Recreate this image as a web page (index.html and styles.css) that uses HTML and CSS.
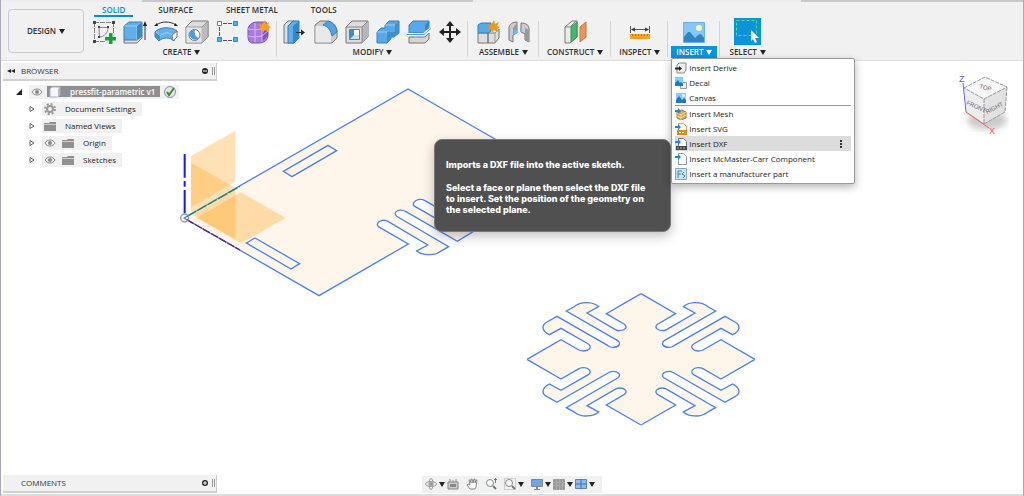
FILE: index.html
```html
<!DOCTYPE html>
<html lang="en">
<head>
<meta charset="utf-8">
<title>pressfit-parametric v1</title>
<link rel="stylesheet" href="styles.css">
</head>
<body>
<div class="app">
  <div class="doc-strip"><span class="strip-a"></span><span class="strip-b"></span><span class="strip-c"></span><span class="strip-d"></span></div>
  <header class="ribbon">
    <button class="design" type="button">DESIGN <i class="caret"></i></button>
    <div class="ribbon-body">
      <nav class="tabs">
        <a class="tab active" href="#">SOLID</a>
        <a class="tab" href="#">SURFACE</a>
        <a class="tab" href="#">SHEET METAL</a>
        <a class="tab" href="#">TOOLS</a>
      </nav>
      <div class="groups">
        <section class="group wide">
          <div class="tools">
            <button class="tool" type="button" aria-label="Create Sketch"><svg viewBox="0 0 24 24"><g fill="none" stroke="#888" stroke-dasharray="5 1"><path d="M2 2.500H21M2.500 2V22M21.500 2V13M2 21.500H13"/><path d="M7 7.500H16C16 13 12 17 7.500 17Z" stroke-dasharray="none"/></g><path d="M1 1h3v3H1zM20 1h3v3h-3zM1 20h3v3H1zM6 6h2v2H6zM15 6h2v2h-2zM6 16h2v2H6z" fill="#444"/><path d="M17 13h3.500v4H24v3.500h-3.500V24H17v-3.500h-4V17h4z" fill="#18a33a"/></svg></button>
            <button class="tool" type="button" aria-label="Extrude"><svg viewBox="0 0 24 24"><path d="M1 20v3h13l5-5v-3z" fill="#ddd" stroke="#777"/><path d="M1 6l5-4h13v14l-5 4H1z" fill="#62aee8" stroke="#347fb9"/><path d="M1 6h13l5-4M14 6v14" fill="none" stroke="#9bd0f6"/><path d="M14 6l5-4v14l-5 4z" fill="#338acb"/><path d="M22 20V5" stroke="#333"/><path d="M22 1l2 5h-4z" fill="#222"/></svg></button>
            <button class="tool" type="button" aria-label="Revolve"><svg viewBox="0 0 24 24"><path d="M2 5C8 1 16 1 22 5" fill="none" stroke="#333"/><path d="M0 6l3-3 1 3zM24 6l-3-3-1 3z" fill="#222"/><path d="M1 12C5 7 17 6 23 11L20 21C16 17 9 17 5 21L1 17z" fill="#65b1ec" stroke="#397db4"/><path d="M2 12l4 4C10 12 15 12 18 15" fill="none" stroke="#a8d8fb"/><path d="M18 15l5-4v6l-4 4z" fill="#f3f3f3" stroke="#777"/><path d="M1 12l5 4v4l-5-3z" fill="#3d8fca"/></svg></button>
            <button class="tool" type="button" aria-label="Hole"><svg viewBox="0 0 24 24"><path d="M1 7l6-6h16v16l-6 6H1z" fill="#ddd" stroke="#777"/><path d="M1 7h16l6-6v16l-6 6z" fill="#bbb" stroke="#999"/><path d="M1.500 7.500h15v15h-15z" fill="#e4e4e4"/><circle cx="9.500" cy="15" r="5.500" fill="#fff" stroke="#777"/><path d="M5 12a5.500 5.500 0 0 0 9 6a6 6 0 0 1-4-8a6 6 0 0 0-5 2z" fill="#4b9edc"/></svg></button>
            <button class="tool" type="button" aria-label="Rectangular Pattern"><svg viewBox="0 0 24 24"><path d="M7 3.500h10M3.500 7v10M7 20.500h10" stroke="#555" stroke-dasharray="4 1"/><path d="M1.500 1.500h4v4h-4z" fill="#fff" stroke="#777"/><path d="M17.500 1.500h4v4h-4zM1.500 17.500h4v4h-4zM17.500 17.500h4v4h-4z" fill="#57aceb" stroke="#3988c1"/></svg></button>
            <button class="tool" type="button" aria-label="Create Form"><svg viewBox="0 0 24 24"><path d="M1 9C2 4 6 2 11 2h8l2 4v9c0 5-4 8-9 8H6c-4 0-5-3-5-7z" fill="#a67bdc" stroke="#7d52b5"/><path d="M15 10l6-5v10l-6 7z" fill="#7e4fc0"/><path d="M1 9c5 1 9 1 14 0l5-4M1 16c5 1 9 1 14 0l6-5M8 3v19M15 9v13" fill="none" stroke="#d8b9f6"/><path d="M18 0l1 4 3-2-1 4 3 1-3 2 1 3-4-2-2 3-1-4-4 1 3-3-3-3 4 1z" fill="#ff9f19"/></svg></button>
          </div>
          <button class="group-name" type="button">CREATE <i class="caret"></i></button>
        </section>
        <section class="group wide">
          <div class="tools">
            <button class="tool" type="button" aria-label="Press Pull"><svg viewBox="0 0 24 24"><path d="M1 5l4-4h6v22H1z" fill="#ddd" stroke="#777"/><path d="M5 6l5-5h6v17l-5 5H5z" fill="#62aee8" stroke="#347fb9"/><path d="M10 6l6-5v17l-6 5z" fill="#3188c9"/><path d="M13 12.500h6" stroke="#333"/><path d="M22 12.500l-4-3v6z" fill="#222"/></svg></button>
            <button class="tool" type="button" aria-label="Fillet"><svg viewBox="0 0 24 24"><path d="M1 5l5-4h6c6 0 11 5 11 11v6l-5 5H1z" fill="#ccc" stroke="#777"/><path d="M1.500 6H8c5 0 9 4 9 9v7.500H1.500z" fill="#e9e9e9"/><path d="M9 5l5-4c5 1 9 6 9 11l-5 4C17 11 14 6 9 5z" fill="#51a4e4" stroke="#347fb9"/></svg></button>
            <button class="tool" type="button" aria-label="Shell"><svg viewBox="0 0 24 24"><path d="M1 7l6-6h16v16l-6 6H1z" fill="#ddd" stroke="#777"/><path d="M17 7l6-6v16l-6 6z" fill="#b7b7b7"/><path d="M1 7h16v16M17 7l6-6" fill="none" stroke="#888"/><path d="M4.500 9.500h10v10h-10z" fill="#bfe2fa" stroke="#777"/><path d="M5 10h4v5l-4 4z" fill="#388dcc"/><path d="M9 10h5v5H9z" fill="#fff"/></svg></button>
            <button class="tool" type="button" aria-label="Combine"><svg viewBox="0 0 24 24"><path d="M9 5l4-4h10v12l-5 4h-3v2l-4 4H1V12l4-4h4z" fill="#58a9e6" stroke="#347fb9"/><path d="M19 5l4-4v12l-5 4h-3v2l-4 4V12h8z" fill="#3c91d1"/><path d="M1 12h10M9 5h10" stroke="#9bd0f6"/></svg></button>
            <button class="tool" type="button" aria-label="Split Body"><svg viewBox="0 0 24 24"><path d="M2 5l4-4h16v8l-4 4H2z" fill="#58a9e6" stroke="#347fb9"/><path d="M18 5l4-4v8l-4 4z" fill="#338acb"/><path d="M2 17h16l4-4v6l-4 4H2z" fill="#d6d6d6" stroke="#777"/><path d="M0 14.500h17l7-6" fill="none" stroke="#fff" stroke-width="3"/><path d="M0 14.500h17l7-6" fill="none" stroke="#3aa4ec"/></svg></button>
            <button class="tool" type="button" aria-label="Move"><svg viewBox="0 0 24 24"><path d="M12 4v16M4 12h16" stroke="#222" stroke-width="2"/><path d="M12 1l4 5H8zM12 23l-4-5h8zM1 12l5-4v8zM23 12l-5 4V8z" fill="#222"/></svg></button>
          </div>
          <button class="group-name" type="button">MODIFY <i class="caret"></i></button>
        </section>
        <section class="group">
          <div class="tools">
            <button class="tool" type="button" aria-label="New Component"><svg viewBox="0 0 24 24"><path d="M2 13h10v10H2zM12 13h7l4-4v9l-4 5h-7z" fill="#dedede" stroke="#777"/><path d="M2 5l3-2h10v8l-3 2H2z" fill="#57a9e7" stroke="#347fb9"/><path d="M19 13v10M19 13l4-4" stroke="#999"/><path d="M18 0l1 4 4-2-2 4 3 1-3 2 1 3-4-2-2 3-1-4-3 1 2-3-3-3 4 1z" fill="#f29813"/></svg></button>
            <button class="tool" type="button" aria-label="Joint"><svg viewBox="0 0 24 24"><path d="M2 8C2 4 6 2 10 2v11l-4 2v7l-4-2zM14 3c5 0 8 2 8 6v13l-4-2v-6l-4-2z" fill="#ccc" stroke="#777"/><path d="M6 8l4-5v10l-4 2zM18 8l4 2v12l-4-2z" fill="#999"/><path d="M7 10h3v4H7zM13 8h2v4h-2z" fill="#68b7f2"/></svg></button>
          </div>
          <button class="group-name" type="button">ASSEMBLE <i class="caret"></i></button>
        </section>
        <section class="group">
          <div class="tools">
            <button class="tool" type="button" aria-label="Offset Plane"><svg viewBox="0 0 24 24"><path d="M2 7l7-6h5v16l-7 6H2z" fill="#ececec" stroke="#777"/><path d="M8 7l6-5v15l-6 5z" fill="#42ba70" stroke="#3b9258"/><path d="M2 7h5l6-6" fill="none" stroke="#888"/><path d="M17 7l6-5v15l-6 5z" fill="#ed925a" stroke="#ca7442"/></svg></button>
          </div>
          <button class="group-name" type="button">CONSTRUCT <i class="caret"></i></button>
        </section>
        <section class="group">
          <div class="tools">
            <button class="tool" type="button" aria-label="Measure"><svg viewBox="0 0 24 24"><path d="M2.500 6v7M21.500 6v7M4 9.500h16" stroke="#555"/><path d="M3 9.500l4-2v4zM21 9.500l-4-2v4z" fill="#333"/><path d="M2 14h20v5H2z" fill="#f3a31d"/><path d="M4.500 14v2M7.500 14v2M10.500 14v2M13.500 14v2M16.500 14v2M19.500 14v2" stroke="#b87818"/></svg></button>
          </div>
          <button class="group-name" type="button">INSPECT <i class="caret"></i></button>
        </section>
        <section class="group tight">
          <div class="tools">
            <button class="tool" type="button" aria-label="Insert"><svg viewBox="0 0 24 24"><path d="M1.500 2.500h21v20h-21z" fill="#83c8f8" stroke="#6bb2e4"/><path d="M2 17l4-5 2 0 5 6 3-3 3-1 3 4v4H2z" fill="#3185c4"/><circle cx="17" cy="8" r="3" fill="#fff6ba"/></svg></button>
          </div>
          <button class="group-name open" type="button" aria-expanded="true">INSERT <i class="caret"></i></button>
          <div class="menu" role="menu">
            <button class="item" type="button" role="menuitem"><svg viewBox="0 0 12 12"><path d="M2 3l2-2h7v7l-2 3H2z" fill="#eee" stroke="#888"/><path d="M0 6.500h5" stroke="#222" stroke-width="2"/><path d="M7 6.500L4 4v5z" fill="#222"/></svg>Insert Derive</button>
            <button class="item" type="button" role="menuitem"><svg viewBox="0 0 12 12"><path d="M5.500 5.500h6v6h-6z" fill="#eee" stroke="#999"/><path d="M0 0h8v9H0z" fill="#8bccf6"/><path d="M0 6l3-3 2 3 1-1 2 2v2H0z" fill="#1e7abd"/></svg>Decal</button>
            <button class="item" type="button" role="menuitem"><svg viewBox="0 0 12 12"><path d="M1 1h10v10H1z" fill="#8bccf6"/><path d="M1 8l3-4 3 4 2-2 2 2v3H1z" fill="#1e7abd"/><circle cx="8.500" cy="3.500" r="1.500" fill="#fff"/></svg>Canvas</button>
            <hr class="rule">
            <button class="item" type="button" role="menuitem"><svg viewBox="0 0 12 12"><path d="M2 4l5-2 4 2v6l-5 2-4-2z" fill="#d6ad58" stroke="#a67b29"/><path d="M2 5l4 2 5-3M6 7v5M2 8l4 2 5-3" fill="none" stroke="#f1d795"/><path d="M0 2h3V0l3 3-3 3V4H0z" fill="#1489df"/></svg>Insert Mesh</button>
            <button class="item" type="button" role="menuitem"><svg viewBox="0 0 12 12"><path d="M3.500.500h5l3 3v8h-8z" fill="#fff" stroke="#e8a44b"/><path d="M2 7h10v5H2z" fill="#e38912"/><path d="M4 9.500h6" stroke="#fff" stroke-dasharray="2 1"/><path d="M0 3h3V1l3 3-3 3V5H0z" fill="#1489df"/></svg>Insert SVG</button>
            <button class="item hover" type="button" role="menuitem"><svg viewBox="0 0 12 12"><path d="M3.500.500h5l3 3v8h-8z" fill="#fff" stroke="#777"/><path d="M1 8h11v4H1z" fill="#444"/><path d="M2 10h9" stroke="#bbb" stroke-dasharray="2 1"/><path d="M0 3h3V1l3 3-3 3V5H0z" fill="#1489df"/></svg>Insert DXF<svg class="more" viewBox="0 0 4 12"><path d="M1 2h2v2H1zM1 5h2v2H1zM1 8h2v2H1z" fill="#333"/></svg></button>
            <button class="item" type="button" role="menuitem"><svg viewBox="0 0 12 12"><path d="M3.500.500h5l3 3v8h-8z" fill="#fff" stroke="#999"/><path d="M0 3h3V1l3 3-3 3V5H0z" fill="#1489df"/></svg>Insert McMaster-Carr Component</button>
            <button class="item" type="button" role="menuitem"><svg viewBox="0 0 12 12"><path d="M.500.500h11v11H.500z" fill="#c9e4f2" stroke="#76abc5"/><path d="M3 10V3h4M3 6h3M9 4l-2 2 3 2-2 2" fill="none" stroke="#4384a8"/></svg>Insert a manufacturer part</button>
          </div>
        </section>
        <section class="group last">
          <div class="tools">
            <button class="tool selected" type="button" aria-label="Select"><svg viewBox="0 0 27 27"><path d="M2.500 2.500h20v15h-20z" fill="none" stroke="#54db91" stroke-dasharray="3 2"/><path d="M17 12l8 8h-4l2 4-2 1-2-4-2 2z" fill="#fff"/></svg></button>
          </div>
          <button class="group-name" type="button">SELECT <i class="caret"></i></button>
        </section>
      </div>
    </div>
  </header>

  <main class="canvas">
    <svg class="drawing" viewBox="0 60 1024 434" width="1024" height="434" aria-hidden="true">
      <defs>
        <g id="quarter">
          <path class="face" d="M363 26L467 86L414 117C400 126 412 137 427 137C434 137 437 135 441 133L525 84L490 65C505 52 540 46 565 66L587 78L433 167C421 175 430 187 447 187C455 187 458 185 462 182L615 94L645 111C663 121 661 137 638 149L603 130L521 177C508 186 520 198 534 198C541 198 545 197 549 195L603 164L705 223V224H362V26Z"/>
          <path class="edge" d="M363 26L467 86L414 117C400 126 412 137 427 137C434 137 437 135 441 133L525 84L490 65C505 52 540 46 565 66L587 78L433 167C421 175 430 187 447 187C455 187 458 185 462 182L615 94L645 111C663 121 661 137 638 149L603 130L521 177C508 186 520 198 534 198C541 198 545 197 549 195L603 164L705 223"/>
        </g>
      </defs>
      <g transform="translate(370 130) scale(.3333)">
        <path class="face edge" d="M-558 264L114 -123L380 30L460 80L300 290L165 212C145 202 125 216 131 227L240 290H300L312 303L262 334L108 245C88 234 66 246 80 259L236 350L200 371C175 378 150 372 140 363L173 345L55 275C38 264 14 278 25 290L115 342L-153 497Z"/>
      </g>
      <g transform="translate(170 80) scale(.3333)">
        <path class="slot edge" d="M340 274L474 196L500 212L366 290ZM229 489L255 474L389 551L363 567Z"/>
        <path class="plane" d="M63 228L196 152V305L63 382Z"/>
        <path class="plane" d="M63 248L196 325V478L63 402Z"/>
        <path class="plane" d="M80 414L213 337L347 414L213 490Z"/>
        <path d="M50 410L210 319" stroke="#078f80" stroke-width="4" stroke-dasharray="32 4"/>
        <path d="M50 419L210 510" stroke="#64206f" stroke-width="4" stroke-dasharray="24 4"/>
        <path d="M44 222V293M44 303V320M44 330V400" stroke="#1717f5" stroke-width="6"/>
        <circle cx="44" cy="414" r="12" fill="none" stroke="#999" stroke-width="4"/>
      </g>
      <g transform="translate(520 285) scale(.3333)">
        <use href="#quarter"/>
        <use href="#quarter" transform="translate(726 0) scale(-1 1)"/>
        <use href="#quarter" transform="translate(0 446) scale(1 -1)"/>
        <use href="#quarter" transform="translate(726 446) scale(-1 -1)"/>
      </g>
    </svg>

    <svg class="viewcube" viewBox="0 0 56 72" aria-label="View cube">
      <defs><filter id="soft"><feGaussianBlur stdDeviation="3"/></filter></defs>
      <ellipse cx="34" cy="50" rx="20" ry="10" fill="#999" opacity=".5" filter="url(#soft)"/>
      <path d="M11 18L32 7L54 17L31 29Z" fill="#f7f7f7"/>
      <path d="M11 18L31 29V54L13 42Z" fill="#ededed"/>
      <path d="M31 29L54 17L52 42L31 54Z" fill="#e2e2e2"/>
      <path d="M11 18L32 7L54 17L31 29ZM31 29V54L13 42M31 54L52 42L54 17" fill="none" stroke="#999" stroke-dasharray="4 1"/>
      <path d="M10 13L13 42" stroke="#6666e8"/>
      <path d="M13 42L36 58" stroke="#f06565"/>
      <text x="6" y="12" class="axis" fill="#5555e8">Z</text>
      <text x="36" y="64" class="axis" fill="#ef5555">X</text>
      <text class="side" transform="translate(13 34) rotate(25)">FRONT</text>
      <text class="side" transform="translate(34 44) rotate(-28)">RIGHT</text>
      <text class="side" transform="translate(26 18) rotate(15)">TOP</text>
    </svg>

    <aside class="browser">
      <div class="panel-bar">
        <svg class="rewind" viewBox="0 0 8 6"><path d="M4 1v4L0 3zM8 1v4L4 3z" fill="#222"/></svg>
        <span class="panel-title">BROWSER</span>
        <button class="round" type="button" aria-label="Collapse"><svg viewBox="0 0 6 6"><circle cx="3" cy="3" r="3" fill="#222"/><path d="M1 3h4" stroke="#fff"/></svg></button>
        <i class="grip"></i>
      </div>
      <ul class="tree">
        <li class="root"><svg class="twist" viewBox="0 0 6 6"><path d="M6 0v6H0z" fill="#222"/></svg>
          <span class="row"><svg class="ico" viewBox="0 0 12 12"><path d="M1 6C3 2 9 2 11 6C9 10 3 10 1 6Z" fill="none" stroke="#888"/><circle cx="6" cy="6" r="2" fill="#888"/></svg>
            <span class="doc"><svg class="ico" viewBox="0 0 12 12"><path d="M1 3l2-2h8v8l-2 2H1z" fill="#f5f7fc" stroke="#a9b4c8"/><path d="M9 3l2-2v8l-2 2z" fill="#aeb9cc"/></svg>pressfit-parametric v1</span>
            <svg class="ico" viewBox="0 0 12 12"><circle cx="6" cy="6" r="5.500" fill="#dfe4ef" stroke="#8790a1"/><path d="M3 6l2 3 5-7" fill="none" stroke="#3d8e28" stroke-width="2"/></svg></span></li>
        <li><svg class="twist" viewBox="0 0 6 6"><path d="M1 .500L5 3L1 5.500Z" fill="#fff" stroke="#666"/></svg>
          <span class="row"><svg class="ico" viewBox="0 0 12 12"><circle cx="6" cy="6" r="3" fill="none" stroke="#999" stroke-width="2"/><circle cx="6" cy="6" r="5" fill="none" stroke="#999" stroke-width="2" stroke-dasharray="2 1.927"/></svg><b class="label">Document Settings</b></span></li>
        <li><svg class="twist" viewBox="0 0 6 6"><path d="M1 .500L5 3L1 5.500Z" fill="#fff" stroke="#666"/></svg>
          <span class="row"><svg class="ico" viewBox="0 0 12 12"><path d="M0 3h5l1-1h6v9H0z" fill="#909090"/><path d="M0 4.500h12" stroke="#ccc"/></svg><b class="label">Named Views</b></span></li>
        <li><svg class="twist" viewBox="0 0 6 6"><path d="M1 .500L5 3L1 5.500Z" fill="#fff" stroke="#666"/></svg>
          <span class="row"><svg class="ico" viewBox="0 0 12 12"><path d="M1 6C3 2 9 2 11 6C9 10 3 10 1 6Z" fill="none" stroke="#888"/><circle cx="6" cy="6" r="2" fill="#888"/></svg><svg class="ico" viewBox="0 0 12 12"><path d="M0 3h5l1-1h6v9H0z" fill="#909090"/><path d="M0 4.500h12" stroke="#ccc"/></svg><b class="label">Origin</b></span></li>
        <li><svg class="twist" viewBox="0 0 6 6"><path d="M1 .500L5 3L1 5.500Z" fill="#fff" stroke="#666"/></svg>
          <span class="row"><svg class="ico" viewBox="0 0 12 12"><path d="M1 6C3 2 9 2 11 6C9 10 3 10 1 6Z" fill="none" stroke="#888"/><circle cx="6" cy="6" r="2" fill="#888"/></svg><svg class="ico" viewBox="0 0 12 12"><path d="M0 3h5l1-1h6v9H0z" fill="#909090"/><path d="M0 4.500h12" stroke="#ccc"/></svg><b class="label">Sketches</b></span></li>
      </ul>
    </aside>

    <div class="tooltip" role="tooltip">
      <p>Imports a DXF file into the active sketch.</p>
      <p>Select a face or plane then select the DXF file to insert. Set the position of the geometry on the selected plane.</p>
    </div>

    <footer class="bottom">
      <div class="panel-bar">
        <span class="panel-title">COMMENTS</span>
        <button class="round" type="button" aria-label="Expand"><svg viewBox="0 0 6 6"><circle cx="3" cy="3" r="3" fill="#222"/><path d="M1 3h4M3 1v4" stroke="#fff"/></svg></button>
        <i class="grip"></i>
      </div>
      <div class="viewbar">
        <button type="button" aria-label="Orbit"><svg viewBox="0 0 12 12"><ellipse cx="6" cy="6" rx="5.500" ry="2.500" fill="none" stroke="#999"/><ellipse cx="6" cy="6" rx="2" ry="5.500" fill="none" stroke="#999"/><path d="M6 4v4M4 6h4" stroke="#777"/></svg><i class="caret"></i></button>
        <button type="button" aria-label="Look At"><svg viewBox="0 0 12 12"><path d="M1 4h10v7H1zM3 4V1M6 4V2M9 4V1" fill="#ccc" stroke="#888"/><path d="M3 6h6v3H3z" fill="#888"/></svg></button>
        <button class="spaced" type="button" aria-label="Pan"><svg viewBox="0 0 12 12"><path d="M4 11L1 7l1-1 2 1-1-5h1l1 3V1h1l1 4 1-4h1v4l1-3h1L10 9l-1 2z" fill="#fff" stroke="#888"/></svg></button>
        <button class="spaced" type="button" aria-label="Zoom"><svg viewBox="0 0 12 12"><circle cx="5" cy="5" r="3.500" fill="#f7fbff" stroke="#888"/><path d="M8 8l3 3" stroke="#777" stroke-width="2"/><path d="M10.500 0v5M9 1.500h3" stroke="#777"/></svg></button>
        <button class="spaced" type="button" aria-label="Zoom Window"><svg viewBox="0 0 12 12"><path d="M.500.500h11v11H.500z" fill="none" stroke="#aaa" stroke-dasharray="1 1"/><circle cx="5" cy="5" r="3.500" fill="#f7fbff" stroke="#888"/><path d="M8 8l3 3" stroke="#777" stroke-width="2"/></svg><i class="caret"></i></button>
        <button class="spaced" type="button" aria-label="Display Settings"><svg viewBox="0 0 12 12"><path d="M.500 1.500h11v7H.500z" fill="#70a5e0" stroke="#888"/><path d="M5 9h2v2H5zM3 11h6v1H3z" fill="#888"/></svg><i class="caret"></i></button>
        <button type="button" aria-label="Grid and Snaps"><svg viewBox="0 0 12 12"><path d="M.500 1.500h11v10H.500z" fill="#999" stroke="#999"/><path d="M3.500 1v11M6.500 1v11M9.500 1v11M0 4.500h12M0 7.500h12" stroke="#aaa"/></svg><i class="caret"></i></button>
        <button type="button" aria-label="Viewports"><svg viewBox="0 0 12 12"><path d="M.500 1.500h11v9H.500z" fill="#8fbbea" stroke="#5d83b8"/><path d="M6 1v10M0 6h12" stroke="#4971aa"/></svg><i class="caret"></i></button>
      </div>
    </footer>
  </main>
</div>
</body>
</html>
```
FILE: styles.css
```css
* { box-sizing: border-box; }
body { margin: 0; font-family: "Open Sans", "Noto Sans", sans-serif; font-size: 8px; line-height: 12px; color: #333; background: #fff; }
button { margin: 0; padding: 0; border: 0; background: none; font: inherit; color: inherit; }
svg { display: block; }

.app { display: flex; flex-direction: column; min-height: 100vh; border-left: 1px solid #aaa7b8; border-right: 1px solid #aaa7b8; }
.doc-strip { display: grid; grid-template-columns: 141fr 331fr 328fr 222fr; height: 2px; background: #ededed; }
.strip-b, .strip-d { background: #c8c8c8; }

.ribbon { position: relative; z-index: 2; display: flex; height: 59px; background: #f1f1f1; border-bottom: 1px solid #dedede; }
.design { display: flex; align-items: center; justify-content: center; gap: 3px; width: 76px; height: 44px; margin: 7px 2px 0 7px; border: 1px solid #cacaca; border-radius: 4px; font-weight: 600; }
.caret { display: inline-block; border: 3px solid transparent; border-top: 5px solid #222; border-bottom: 0; }
.ribbon-body { flex: 1; }

.tabs { display: flex; gap: 17px; padding: 2px 0 0 8px; height: 15px; }
.tab { height: 13px; padding: 0 8px; color: #333; text-decoration: none; font-weight: 600; }
.tab.active { color: #0a8bd6; border-bottom: 2px solid #0a8bd6; }

.groups { display: flex; }
.group { position: relative; display: flex; flex-direction: column; align-items: center; height: 41px; padding: 0 8px; }
.group.wide { padding: 0 6px; }
.group.tight { padding: 0 3px; }
.group.last { padding: 0 9px; }
.group:not(.last)::after { content: ""; position: absolute; right: 0; top: 4px; width: 1px; height: 36px; background: #d3d3d3; }
.tools { display: flex; align-items: center; gap: 7px; height: 29px; }
.tool { width: 24px; height: 24px; }
.tool.selected { width: 27px; height: 27px; background: #0b93dc; }
.group-name { display: flex; align-items: center; gap: 3px; height: 12px; font-weight: 600; white-space: nowrap; }
.group-name.open { padding: 0 5px; background: #0b93dc; color: #fff; }
.group-name.open .caret { border-top-color: #fff; }

.menu { position: absolute; top: 41px; left: 3px; width: 184px; padding: 1px 3px 2px; background: #fff; border: 1px solid #999; border-radius: 2px; box-shadow: 0 3px 8px rgba(0, 0, 0, .3); color: #222; font-weight: 500; }
.item { display: flex; align-items: center; gap: 2px; width: 100%; height: 15px; text-align: left; white-space: nowrap; }
.item svg { width: 12px; height: 12px; }
.item .more { width: 4px; margin: 0 8px 0 auto; }
.item.hover { background: #dcdcdc; }
.rule { height: 1px; margin: 0; border: 0; background: #999; }

.canvas { position: relative; flex: 1; display: flex; flex-direction: column; padding: 2px 2px 0; border-bottom: 2px solid #ddd; overflow: hidden; }
.drawing { position: absolute; left: -1px; top: -1px; }
.face { fill: #fff6eb; }
.edge { stroke: #4c80ee; stroke-width: 4; }
.edge:not(.face) { fill: none; }
.plane { fill: #ffa51f; opacity: .33; }
.viewcube { position: absolute; right: 14px; top: 9px; width: 56px; height: 72px; }
.axis { font: 9px "Liberation Sans", sans-serif; }
.side { font: 6px "Liberation Sans", sans-serif; fill: #666; }

.browser { position: relative; }
.panel-bar { display: flex; align-items: center; width: 214px; height: 18px; padding: 0 1px 0 4px; background: #f1f1f1; border-right: 1px solid #ccc; border-bottom: 2px solid #d0d0d0; }
.rewind { width: 8px; height: 6px; margin-right: -8px; }
.panel-title { flex: 1; padding-left: 14px; }
.round svg { width: 6px; height: 6px; }
.grip { width: 3px; height: 8px; margin-left: 4px; border: 1px solid #999; border-width: 0 1px; }

.tree { margin: 0; padding: 2px 0 0 26px; list-style: none; }
.tree li { display: flex; align-items: center; gap: 7px; height: 17px; }
.tree .root { margin-left: -13px; }
.twist { width: 6px; height: 6px; }
.ico { width: 12px; height: 12px; }
.row { display: flex; align-items: center; gap: 6px; height: 14px; padding: 0 6px 0 2px; background: #f1f1f1; }
.root .row { gap: 4px; padding: 0 3px 0 2px; }
.doc { display: flex; align-items: center; gap: 9px; height: 11px; padding: 0 5px 0 2px; background: #8f8f8f; color: #fff; font-weight: 600; }
.label { padding-left: 3px; font-weight: 500; color: #222; }

.tooltip { position: absolute; left: 433px; top: 78px; width: 237px; padding: 19px 17px 16px 11px; border: 1px solid #777; border-radius: 8px; background: #505050; color: #fff; font: 800 9px/11px Inter, sans-serif; box-shadow: 0 4px 12px rgba(0, 0, 0, .25); }
.tooltip p { margin: 0 0 12px; }
.tooltip p:last-child { margin: 0; }

.bottom { position: relative; display: grid; grid-template-columns: 1fr auto 1fr; align-items: center; margin-top: auto; padding-bottom: 1px; }
.viewbar { display: flex; align-items: center; height: 17px; padding: 0 7px 0 3px; background: #f1f1f1; }
.viewbar button { display: flex; align-items: center; gap: 2px; margin-right: 2px; }
.viewbar button:last-child { margin-right: 0; }
.viewbar .spaced { margin-left: 5px; }
.viewbar svg { width: 12px; height: 12px; }
```
